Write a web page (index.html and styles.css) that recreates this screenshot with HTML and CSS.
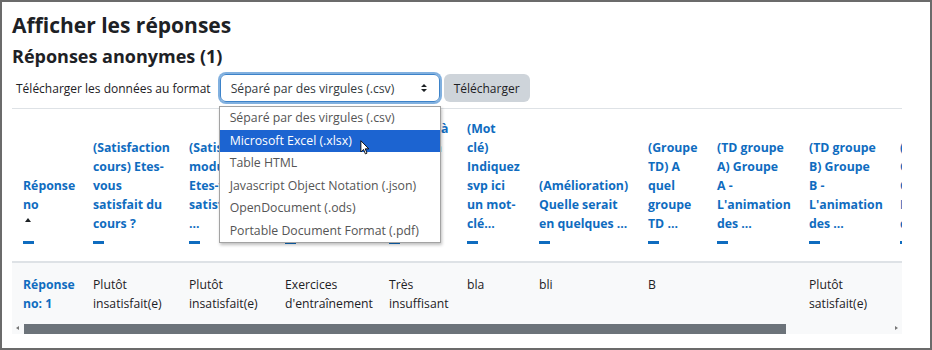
FILE: index.html
```html
<!DOCTYPE html>
<html lang="fr">
<head>
    <meta charset="UTF-8">
    <title>Afficher les réponses</title>
    <link rel="stylesheet" href="styles.css">
</head>
<body>
    <div class="frame">
        <h2 class="page-title">Afficher les réponses</h2>
        <h3 class="sub-title">Réponses anonymes (1)</h3>

        <div class="download-row">
            <span class="download-label">Télécharger les données au format</span>
            <div class="select-wrap">
                <div class="select">
                    <span>Séparé par des virgules (.csv)</span>
                    <svg class="caret" width="8" height="10" viewBox="0 0 8 10"><path d="M4 1 L7 4 H1 Z M4 9 L7 6 H1 Z" fill="#1d2125"/></svg>
                </div>
                <ul class="options">
                    <li>Séparé par des virgules (.csv)</li>
                    <li class="active">Microsoft Excel (.xlsx)</li>
                    <li>Table HTML</li>
                    <li>Javascript Object Notation (.json)</li>
                    <li>OpenDocument (.ods)</li>
                    <li>Portable Document Format (.pdf)</li>
                </ul>
                <svg class="cursor" width="10" height="15" viewBox="0 0 13 20"><path d="M1 1 V16 L4.5 12.5 L7 18.5 L9.2 17.5 L6.8 11.8 H11.5 Z" fill="#fff" stroke="#000" stroke-width="1.2" stroke-linejoin="round"/></svg>
            </div>
            <button class="btn">Télécharger</button>
        </div>

        <div class="table-scroll">
            <table class="responses">
                <colgroup>
                    <col style="width:70px"><col style="width:96px"><col style="width:96px"><col style="width:104px">
                    <col style="width:78px"><col style="width:72px"><col style="width:109px"><col style="width:69px">
                    <col style="width:92px"><col style="width:91px"><col style="width:100px">
                </colgroup>
                <thead>
                    <tr>
                        <th><a href="#">Réponse<br>no</a><span class="sort"></span><span class="hide-col"></span></th>
                        <th><a href="#">(Satisfaction<br>cours) Etes-<br>vous<br>satisfait du<br>cours ?</a><span class="hide-col"></span></th>
                        <th><a href="#">(Satisfaction<br>module)<br>Etes-vous<br>satisfait du<br>...</a><span class="hide-col"></span></th>
                        <th><a href="#">(Contenu)<br>Quels sont<br>les points<br>forts du<br>module ...</a><span class="hide-col"></span></th>
                        <th><a href="#">(Temps) à<br>combien<br>estimez<br>votre<br>travail<br>perso ...</a><span class="hide-col"></span></th>
                        <th><a href="#">(Mot<br>clé)<br>Indiquez<br>svp ici<br>un mot-<br>clé...</a><span class="hide-col"></span></th>
                        <th><a href="#">(Amélioration)<br>Quelle serait<br>en quelques ...</a><span class="hide-col"></span></th>
                        <th><a href="#">(Groupe<br>TD) A<br>quel<br>groupe<br>TD ...</a><span class="hide-col"></span></th>
                        <th><a href="#">(TD groupe<br>A) Groupe<br>A -<br>L'animation<br>des ...</a><span class="hide-col"></span></th>
                        <th><a href="#">(TD groupe<br>B) Groupe<br>B -<br>L'animation<br>des ...</a><span class="hide-col"></span></th>
                        <th><a href="#">(TD groupe<br>C) Groupe<br>C -<br>L'animation<br>des ...</a><span class="hide-col"></span></th>
                    </tr>
                </thead>
                <tbody>
                    <tr>
                        <td><a href="#" class="row-link">Réponse<br>no: 1</a></td>
                        <td>Plutôt<br>insatisfait(e)</td>
                        <td>Plutôt<br>insatisfait(e)</td>
                        <td>Exercices<br>d'entraînement</td>
                        <td>Très<br>insuffisant</td>
                        <td>bla</td>
                        <td>bli</td>
                        <td>B</td>
                        <td></td>
                        <td>Plutôt<br>satisfait(e)</td>
                        <td></td>
                    </tr>
                </tbody>
            </table>
            <div class="scrollbar">
                <span class="arrow left"></span>
                <div class="thumb"></div>
                <span class="arrow right"></span>
            </div>
        </div>
    </div>
</body>
</html>
```

FILE: styles.css
```css
* {
    box-sizing: border-box;
}
body {
    margin: 0;
    font-family: "Open Sans", "Noto Sans", sans-serif;
    color: #1d2125;
    background: #fff;
}
.frame {
    width: 932px;
    height: 350px;
    border: 2px solid #6b6b6b;
    padding: 0 10px;
    overflow: hidden;
}
.page-title {
    margin: 0;
    padding-top: 8px;
    font-size: 21px;
    line-height: 30px;
    font-weight: 700;
}
.sub-title {
    margin: 0;
    padding-top: 4px;
    font-size: 18px;
    line-height: 24px;
    font-weight: 700;
}
.download-row {
    display: flex;
    align-items: center;
    margin-top: 4px;
    padding-left: 4px;
    height: 32px;
}
.download-label {
    font-size: 12px;
    margin-right: 9px;
}
.select-wrap {
    position: relative;
}
.select {
    display: flex;
    align-items: center;
    justify-content: space-between;
    width: 220px;
    height: 28px;
    padding: 0 11px 0 10px;
    border: 1px solid #3d83c9;
    border-radius: 6px;
    box-shadow: 0 0 0 2px rgba(76, 142, 210, 0.7);
    font-size: 12.2px;
    color: #343a40;
}
.options {
    position: absolute;
    top: 32px;
    left: -1px;
    width: 222px;
    margin: 0;
    padding: 0;
    list-style: none;
    background: #fff;
    border: 1px solid #a3a3a3;
    box-shadow: 1px 2px 3px rgba(0, 0, 0, 0.25);
    z-index: 5;
}
.options li {
    height: 22.5px;
    line-height: 22.5px;
    padding-left: 10px;
    font-size: 12.3px;
    color: #555;
    white-space: nowrap;
}
.options li.active {
    background: #1c64d1;
    color: #fff;
}
.cursor {
    position: absolute;
    left: 140px;
    top: 66px;
    z-index: 6;
}
.btn {
    margin-left: 4px;
    height: 28px;
    width: 86px;
    padding: 0;
    border: none;
    border-radius: 6px;
    background: #ced4da;
    color: #1d2125;
    font-family: inherit;
    font-size: 12px;
}
.table-scroll {
    width: 890px;
    margin-top: 4px;
    overflow: hidden;
}
.responses {
    table-layout: fixed;
    width: 977px;
    border-collapse: collapse;
    font-size: 12.2px;
}
.responses th,
.responses td {
    padding: 0 4px 0 11px;
    text-align: left;
    white-space: nowrap;
    overflow: hidden;
    line-height: 19px;
}
.responses th {
    vertical-align: bottom;
    border-top: 1px solid #dee2e6;
    border-bottom: 2px solid #dee2e6;
    padding-top: 10px;
    padding-bottom: 10px;
    font-size: 12.3px;
    font-weight: 700;
}
.responses th a,
.row-link {
    color: #0f6cbf;
    text-decoration: none;
    font-weight: 700;
}
.sort {
    display: block;
    height: 19px;
    position: relative;
}
.sort::before {
    content: "";
    position: absolute;
    left: 2px;
    top: 4px;
    border-left: 3.5px solid transparent;
    border-right: 3.5px solid transparent;
    border-bottom: 4px solid #1d2125;
}
.hide-col {
    display: block;
    height: 18px;
    position: relative;
}
.hide-col::before {
    content: "";
    position: absolute;
    left: 0;
    top: 8px;
    width: 11px;
    height: 3px;
    background: #0f6cbf;
}
.responses td {
    vertical-align: top;
    background: #f8f9fa;
    padding-top: 12px;
    padding-bottom: 10px;
}
.scrollbar {
    display: flex;
    align-items: center;
    height: 11px;
    background: #f8f9fa;
}
.arrow {
    width: 12px;
    height: 11px;
    position: relative;
}
.arrow.left::before {
    content: "";
    position: absolute;
    left: 4px;
    top: 3px;
    border-top: 2.5px solid transparent;
    border-bottom: 2.5px solid transparent;
    border-right: 3px solid #777;
}
.arrow.right {
    margin-left: auto;
}
.arrow.right::before {
    content: "";
    position: absolute;
    left: 5px;
    top: 3px;
    border-top: 2.5px solid transparent;
    border-bottom: 2.5px solid transparent;
    border-left: 3px solid #777;
}
.thumb {
    width: 762px;
    height: 10px;
    background: #6c737a;
}
```
